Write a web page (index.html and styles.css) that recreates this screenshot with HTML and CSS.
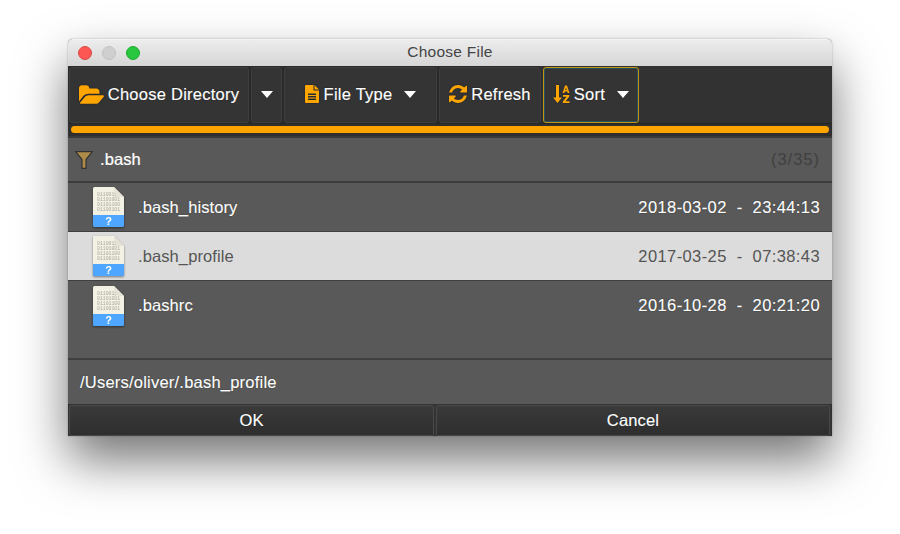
FILE: index.html
```html
<!DOCTYPE html>
<html lang="en">
<head>
<meta charset="utf-8">
<title>Choose File</title>
<link rel="stylesheet" href="styles.css">
</head>
<body>
<main class="window">
  <header class="titlebar">
    <div class="lights"><span class="light red"></span><span class="light grey"></span><span class="light green"></span></div>
    <div class="title">Choose File</div>
  </header>
  <div class="toolbar">
    <div class="btn b-dir">
      <svg class="ic" width="25" height="19" viewBox="64 128 1879 1408"><path fill="#ffa500" d="M1943 952q0 31-31 66l-336 396q-43 51-120.500 86.500t-143.500 35.500h-1088q-34 0-60.500-13t-26.500-43q0-31 31-66l336-396q43-51 120.500-86.500t143.500-35.500h1088q34 0 60.500 13t26.500 43zm-343-344v160h-832q-94 0-197 47.500t-164 119.500l-337 396-5 6q0-4-.500-12.500t-.500-12.500v-960q0-92 66-158t158-66h320q92 0 158 66t66 158v32h544q92 0 158 66t66 158z"/></svg>
      <span>Choose Directory</span>
    </div>
    <div class="btn b-arrow"><i class="caret"></i></div>
    <div class="btn b-type">
      <svg class="ic" width="14" height="18" viewBox="0 0 14 18"><path d="M1 0 H8.500 V5.500 H14 V17 A1 1 0 0 1 13 18 H1 A1 1 0 0 1 0 17 V1 A1 1 0 0 1 1 0Z M9.500 0 L14 4.500 H9.500Z M3 8.500 V10 H11 V8.500Z M3 11 V12.500 H11 V11Z M3 13.500 V15 H11 V13.500Z" fill="#ffa500" fill-rule="evenodd"/></svg>
      <span>File Type</span><i class="caret gap"></i>
    </div>
    <div class="btn b-ref">
      <svg class="ic" width="18" height="18" viewBox="0 0 1536 1536"><path fill="#ffa500" d="M1511 928q0 5-1 7-64 268-268 434.500T764 1536q-146 0-282.500-55T238 1324l-129 129q-19 19-45 19t-45-19-19-45V960q0-26 19-45t45-19h448q26 0 45 19t19 45-19 45l-137 137q71 66 161 102t187 36q134 0 250-65t186-179q11-17 53-117 8-23 30-23h192q13 0 22.500 9.500t9.500 22.500zm25-800v448q0 26-19 45t-45 19h-448q-26 0-45-19t-19-45 19-45l138-138Q969 256 768 256q-134 0-250 65T332 500q-11 17-53 117-8 23-30 23H50q-13 0-22.500-9.500T18 608v-7q65-268 270-434.500T768 0q146 0 284 55.500T1297 212l130-129q19-19 45-19t45 19 19 45z"/></svg>
      <span>Refresh</span>
    </div>
    <div class="btn b-sort focus">
      <svg class="ic" width="17" height="18" viewBox="0 0 17 18"><path d="M3 0 H6 V12.500 H9 L4.500 18 L0 12.500 H3Z" fill="#ffa500"/><path d="M9.500 8 L12 .5 H14 L16.500 8 H14.600 L14.200 6.500 H11.800 L11.400 8Z M12.300 5 H13.700 L13 2.600Z" fill="#ffa500" fill-rule="evenodd"/><path d="M10 10 H16.300 V11.500 L12.600 16.300 H16.500 V18 H9.800 V16.500 L13.500 11.700 H10Z" fill="#ffa500"/></svg>
      <span>Sort</span><i class="caret gap2"></i>
    </div>
  </div>
  <div class="progress"><div class="bar"></div></div>
  <div class="filter">
    <svg class="funnel" width="18" height="18" viewBox="0 0 18 18"><path d="M.7 .7 H17.300 L11 8.500 V17.300 H7 V8.500Z" fill="#b08c4a" stroke="#333" stroke-width="1.200"/></svg>
    <span class="query">.bash</span>
    <span class="count">(3/35)</span>
  </div>
  <ul class="list">
    <li class="row">
      <svg class="fileicon" viewBox="0 0 31 40">
        <path d="M0 1.500 A1.500 1.500 0 0 1 1.500 0 H21 L31 10 V28 H0Z" fill="#f2f1e4"/>
        <path d="M21 0 V10 H31Z" fill="#e4e3d6"/>
        <path d="M0 28 H31 V38.500 A1.500 1.500 0 0 1 29.500 40 H1.500 A1.500 1.500 0 0 1 0 38.500Z" fill="#4ea6ff"/>
        <text class="bit" x="4" y="8.500">011001:</text>
        <text class="bit" x="4" y="13.500">01101001</text>
        <text class="bit" x="4" y="18.500">01101100</text>
        <text class="bit" x="4" y="23.500">01100101</text>
        <text class="q" x="15.500" y="38">?</text>
      </svg>
      <span class="name">.bash_history</span><span class="date">2018-03-02&nbsp; - &nbsp;23:44:13</span>
    </li>
    <li class="row sel">
      <svg class="fileicon" viewBox="0 0 31 40">
        <path d="M0 1.500 A1.500 1.500 0 0 1 1.500 0 H21 L31 10 V28 H0Z" fill="#f2f1e4"/>
        <path d="M21 0 V10 H31Z" fill="#e4e3d6"/>
        <path d="M0 28 H31 V38.500 A1.500 1.500 0 0 1 29.500 40 H1.500 A1.500 1.500 0 0 1 0 38.500Z" fill="#4ea6ff"/>
        <text class="bit" x="4" y="8.500">011001:</text>
        <text class="bit" x="4" y="13.500">01101001</text>
        <text class="bit" x="4" y="18.500">01101100</text>
        <text class="bit" x="4" y="23.500">01100101</text>
        <text class="q" x="15.500" y="38">?</text>
      </svg>
      <span class="name">.bash_profile</span><span class="date">2017-03-25&nbsp; - &nbsp;07:38:43</span>
    </li>
    <li class="row">
      <svg class="fileicon" viewBox="0 0 31 40">
        <path d="M0 1.500 A1.500 1.500 0 0 1 1.500 0 H21 L31 10 V28 H0Z" fill="#f2f1e4"/>
        <path d="M21 0 V10 H31Z" fill="#e4e3d6"/>
        <path d="M0 28 H31 V38.500 A1.500 1.500 0 0 1 29.500 40 H1.500 A1.500 1.500 0 0 1 0 38.500Z" fill="#4ea6ff"/>
        <text class="bit" x="4" y="8.500">011001:</text>
        <text class="bit" x="4" y="13.500">01101001</text>
        <text class="bit" x="4" y="18.500">01101100</text>
        <text class="bit" x="4" y="23.500">01100101</text>
        <text class="q" x="15.500" y="38">?</text>
      </svg>
      <span class="name">.bashrc</span><span class="date">2016-10-28&nbsp; - &nbsp;20:21:20</span>
    </li>
  </ul>
  <div class="path">/Users/oliver/.bash_profile</div>
  <div class="actions">
    <div class="act ok">OK</div>
    <div class="act cancel">Cancel</div>
  </div>
</main>
</body>
</html>
```
FILE: styles.css
```css
* { box-sizing: border-box; }
html, body { margin: 0; height: 100%; }
body {
  background: #fff;
  padding: 39px 68px 0;
  overflow: hidden;
  font-family: "Liberation Sans", Arial, sans-serif;
  font-size: 16.500px;
  color: #fff;
}
.window {
  width: 764px;
  height: 397px;
  display: flex;
  flex-direction: column;
  background: #595959;
  border-radius: 5px 5px 0 0;
  box-shadow: 0 24px 50px rgba(0, 0, 0, .55), 0 0 2px rgba(0, 0, 0, .3);
}
.titlebar {
  height: 27px;
  flex: none;
  display: flex;
  align-items: center;
  position: relative;
  background: linear-gradient(#ececec, #d6d6d6);
  border-radius: 5px 5px 0 0;
  border-top: 1px solid #f4f4f4;
}
.lights { display: flex; gap: 10px; padding-left: 10px; margin-top: -1px; }
.light { width: 14px; height: 14px; border-radius: 50%; }
.red { background: #fc5753; border: 1px solid #df4744; }
.grey { background: #cfcfcf; border: 1px solid #c2c2c2; }
.green { background: #29c73f; border: 1px solid #1eac2d; }
.title {
  position: absolute;
  left: 0; right: 0; top: 3px;
  text-align: center;
  font-size: 15.500px;
  letter-spacing: .25px;
  color: #454545;
}
.toolbar {
  height: 58px;
  flex: none;
  display: flex;
  padding: 1px 1px 0;
  gap: 2px;
  background: #323232;
  border-bottom: 1px solid #242424;
}
.btn {
  height: 56px;
  padding-bottom: 2px;
  display: flex;
  align-items: center;
  justify-content: center;
  background: #343434;
  border: 1px solid #3e3e3e;
  border-radius: 3px;
  box-shadow: 0 0 0 1px #2a2a2a;
  letter-spacing: .25px;
  -webkit-text-stroke: .2px #fff;
  text-shadow: 0 0 1px #000;
}
.ic { flex: none; filter: drop-shadow(0 0 1px #1c2230); }
.b-dir { width: 180px; gap: 4px; }
.b-arrow { width: 31px; }
.b-type { width: 153px; gap: 5px; }
.b-ref { width: 102px; gap: 4px; }
.b-sort { width: 96px; gap: 4px; }
.focus { border: 1px solid #c39412; box-shadow: inset 0 0 0 1px #25505f; }
.caret {
  width: 0; height: 0;
  border-left: 6.500px solid transparent;
  border-right: 6.500px solid transparent;
  border-top: 7.500px solid #fff;
}
.gap { margin-left: 7px; }
.gap2 { margin-left: 8px; }
.progress {
  height: 14px;
  flex: none;
  padding: 2px 3px;
  background: #2f2f2f;
  border-bottom: 2px solid #3a3a3a;
}
.bar { height: 7px; background: #ffa500; border-radius: 3.500px; }
.filter {
  height: 45px;
  flex: none;
  display: flex;
  align-items: center;
  padding: 0 12px 0 7px;
  border-bottom: 2px solid #3d3d3d;
}
.funnel { flex: none; }
.query { margin-left: 7px; letter-spacing: .1px; -webkit-text-stroke: .2px #fff; }
.count { margin-left: auto; color: #404040; letter-spacing: 1px; }
.list {
  list-style: none;
  margin: 0;
  padding: 0;
  height: 177px;
  flex: none;
  border-bottom: 2px solid #3f3f3f;
}
.row {
  height: 49px;
  display: flex;
  align-items: center;
  padding: 0 12px 0 25px;
  border-bottom: 1px solid #3f3f3f;
  letter-spacing: .1px;
  -webkit-text-stroke: .2px #fff;
  text-shadow: 0 0 1px #000;
}
.row:nth-child(3) { border-bottom: 0; }
.sel {
  background: #dcdcdc;
  color: #555;
  -webkit-text-stroke: 0;
  text-shadow: none;
}
.fileicon {
  width: 31px;
  height: 40px;
  flex: none;
  overflow: visible;
  text-shadow: none;
  -webkit-text-stroke: 0;
  filter: drop-shadow(0 1px 1px rgba(0, 0, 0, .45));
}
.bit {
  font-family: "Liberation Mono", monospace;
  font-size: 4.800px;
  letter-spacing: 0;
  fill: #a9a89c;
}
.q { font-size: 11px; font-weight: 700; fill: #fff; text-anchor: middle; letter-spacing: 0; }
.name { margin-left: 14px; }
.date { margin-left: auto; letter-spacing: .4px; }
.path {
  height: 44px;
  flex: none;
  display: flex;
  align-items: center;
  padding-left: 12px;
  letter-spacing: .22px;
  -webkit-text-stroke: .2px #fff;
  text-shadow: 0 0 1px #000;
}
.actions {
  height: 32px;
  flex: none;
  display: flex;
  gap: 2px;
  padding: 1px 1px 0;
  background: #333;
}
.act {
  display: flex;
  align-items: center;
  justify-content: center;
  background: linear-gradient(#3a3a3a, #2e2e2e);
  border: 1px solid #484848;
  border-radius: 2px;
  letter-spacing: .15px;
  -webkit-text-stroke: .2px #fff;
  text-shadow: 0 0 1px #000;
}
.ok { width: 365px; }
.cancel { width: 394px; }
```
